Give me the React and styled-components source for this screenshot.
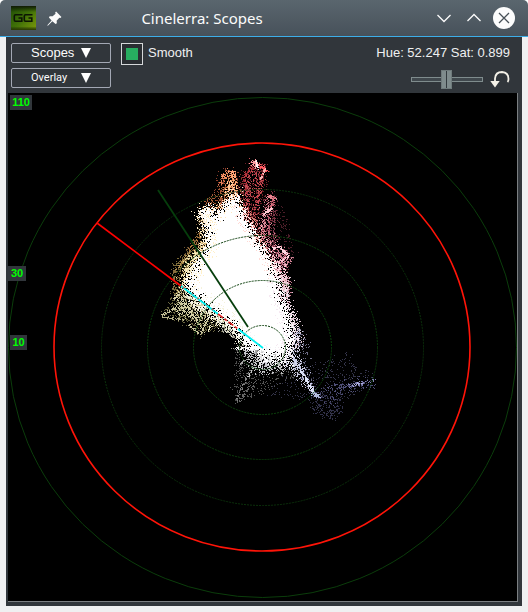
import React, { useState } from 'react';
import styled, { createGlobalStyle } from 'styled-components';

const GlobalStyle = createGlobalStyle`
  * {
    box-sizing: border-box;
  }

  body {
    margin: 0;
    background: #fff;
    font-family: 'Liberation Sans', Arial, sans-serif;
    font-size: 13px;
    color: #eff0f1;
  }
`

const Window = styled.main`
  padding-bottom: 6px;
  background: #eff0f1;
  border-radius: 6px 6px 0 0;
`

const TitleBar = styled.header`
  display: flex;
  align-items: center;
  height: 37px;
  padding: 0 12px 0 11px;
  background: linear-gradient(#5a666e, #47515a);
  border-bottom: 1px solid #3daee9;
  border-radius: 5px 5px 0 0;
`

const Title = styled.h1`
  flex: 1;
  margin: 0;
  padding-right: 94px;
  text-align: center;
  font-family: 'Noto Sans', sans-serif;
  font-size: 15px;
  font-weight: 400;
  line-height: 20px;
  color: #fcfcfc;
`

const IconButton = styled.button`
  display: flex;
  align-items: center;
  justify-content: center;
  width: ${props => props.$size || 24}px;
  height: ${props => props.$size || 24}px;
  padding: 0;
  border: 0;
  background: none;
  color: #fcfcfc;
`

const WindowButtons = styled.div`
  display: flex;
  align-items: center;
  gap: 6px;
`

const Panel = styled.section`
  margin: 0 6px;
  padding: 6px 4px 4px 2px;
  background: #31363b;
`

const Toolbar = styled.div`
  display: flex;
  flex-direction: column;
  gap: 3px;
  padding: 0 8px 3px 3px;
`

const ToolRow = styled.div`
  display: flex;
  align-items: flex-start;
  justify-content: space-between;
  height: 22px;
`

const ToolGroup = styled.div`
  display: flex;
  align-items: flex-start;
  gap: ${props => props.$gap || 10}px;
`

const Dropdown = styled.div`
  position: relative;
  width: 100px;
  height: 20px;
`

const Select = styled.select`
  appearance: none;
  display: block;
  width: 100%;
  height: 100%;
  padding: 0 28px 0 19px;
  border: 1px solid #a3a8b4;
  border-radius: 2px;
  background: #31363b;
  color: #fcfcfc;
  font-family: ${props => props.$small ? 'Roboto, sans-serif' : "'Liberation Sans', Arial, sans-serif"};
  font-size: ${props => props.$small ? 11 : 13}px;
  line-height: 18px;
`

const Arrow = styled.svg`
  position: absolute;
  top: 5px;
  right: 20px;
  width: 10px;
  height: 10px;
  fill: #fff;
  pointer-events: none;
`

const CheckLabel = styled.label`
  display: flex;
  gap: 5px;
  line-height: 20px;
`

const Checkbox = styled.input`
  appearance: none;
  width: 22px;
  height: 22px;
  margin: 0;
  padding: 4px;
  border: 1px solid #d5d8da;
  background: #232629;

  &:checked {
    background: #27ae60 content-box;
    box-shadow: inset 0 0 0 4px #2a2e32;
  }
`

const Readout = styled.output`
  line-height: 20px;
`

const Slider = styled.input`
  appearance: none;
  width: 72px;
  height: 22px;
  margin: 0;
  background: none;

  &::-webkit-slider-runnable-track {
    height: 5px;
    border: 1px solid #7f8c8d;
    background: #40484d;
  }

  &::-webkit-slider-thumb {
    appearance: none;
    width: 11px;
    height: 19px;
    margin-top: -8px;
    border: 1px solid #6f7b7c;
    background: linear-gradient(90deg, #7f8c8d 4px, #333b3f 4px, #333b3f 5px, #7f8c8d 5px);
  }
`

const Scope = styled.svg`
  display: block;
  width: 100%;
  height: auto;
  background: #000;
  border-right: 1px solid #7b7f82;
  border-bottom: 1px solid #7b7f82;
`

const ScaleText = styled.text`
  font-family: 'Liberation Sans', Arial, sans-serif;
  font-size: 11px;
  font-weight: 700;
  fill: #0f0;
`

const CENTER = { x: 262, y: 347 };

const rings = [
  { rx: 254, ry: 250, color: '#0b3d0b' },
  { rx: 161, ry: 158, color: '#0b300b', dash: '2 1' },
  { rx: 115, ry: 112, color: '#0b3c0b', dash: '2 1' },
  { rx: 69, ry: 67, color: '#0c400c', dash: '2 1' },
  { rx: 23, ry: 22, color: '#0c400c', dash: '2 1' }
];

const scale = [
  { value: 110, x: 10, y: 95, width: 22 },
  { value: 30, x: 8, y: 266, width: 18 },
  { value: 10, x: 10, y: 335, width: 17 }
];

const core = [
  [201, 211], [210, 208], [214, 217], [219, 214], [225, 206], [231, 197], [236, 197],
  [239, 206], [243, 217], [248, 226], [253, 233], [256, 242], [263, 251], [269, 261],
  [275, 278], [279, 297], [284, 310], [288, 323], [291, 341], [286, 350], [280, 357],
  [270, 355], [262, 353], [253, 347], [244, 338], [236, 327], [220, 313], [204, 301],
  [192, 291], [188, 284], [193, 271], [201, 257], [207, 249], [208, 230]
];

// core edges in order, each run with its own tint and scatter width
const edges = [
  { from: 0, to: 5, color: '#ffe6bf', spread: 9, density: 3 },
  { from: 5, to: 14, color: '#ffd9d4', spread: 10, density: 4 },
  { from: 14, to: 20, color: '#f6e9f2', spread: 11, density: 6 },
  { from: 20, to: 24, color: '#f2f2f6', spread: 10, density: 5 },
  { from: 24, to: 28, color: '#f4f2dc', spread: 12, density: 5 },
  { from: 28, to: 34, color: '#fff0c8', spread: 11, density: 6 },
  { from: 0, to: 34, color: '#ffffff', spread: 6, density: 6 },
  { from: 0, to: 34, color: '#000000', spread: 7, density: 1 }
];

// polygons filled with scattered samples
const clouds = [
  { n: 260, color: '#8c3f2c', area: [[217, 178], [224, 166], [238, 172], [243, 200], [240, 212], [218, 210], [217, 190]] },
  { n: 200, color: '#e08a56', area: [[221, 175], [232, 171], [238, 184], [244, 210], [218, 212], [224, 190]] },
  { n: 260, color: '#ffd9ae', area: [[229, 184], [236, 184], [244, 212], [240, 218], [214, 220], [207, 207], [220, 205]] },
  { n: 140, color: '#a45a38', area: [[200, 204], [218, 190], [228, 184], [224, 204], [212, 214], [206, 206]] },
  { n: 560, color: '#6c1f27', area: [[241, 176], [251, 161], [266, 164], [266, 186], [259, 208], [262, 245], [244, 216], [239, 195]] },
  { n: 200, color: '#c44850', area: [[244, 172], [252, 161], [264, 164], [262, 180], [257, 205], [254, 225], [242, 205]] },
  { n: 240, color: '#d68078', area: [[240, 205], [250, 210], [260, 230], [268, 250], [262, 256], [246, 226]] },
  { n: 380, color: '#7c2f3e', area: [[262, 198], [273, 192], [276, 218], [275, 248], [287, 252], [290, 270], [273, 268], [258, 240], [263, 220]] },
  { n: 220, color: '#d88c98', area: [[264, 200], [272, 196], [272, 240], [288, 250], [288, 266], [270, 262], [256, 232]] },
  { n: 140, color: '#4b1d28', area: [[272, 195], [284, 210], [293, 240], [292, 262], [274, 248]] },
  { n: 340, color: '#c67c90', area: [[270, 256], [285, 250], [290, 258], [284, 270], [291, 282], [289, 300], [281, 300], [276, 274]] },
  { n: 260, color: '#fbdbe6', area: [[270, 262], [280, 262], [286, 285], [284, 302], [278, 290]] },
  { n: 380, color: '#e0c8d4', area: [[278, 285], [288, 272], [290, 302], [298, 320], [300, 345], [290, 350], [286, 310]] },
  { n: 260, color: '#6f5430', area: [[196, 212], [205, 208], [207, 250], [188, 270], [175, 268], [188, 246], [198, 232]] },
  { n: 240, color: '#d9b87b', area: [[201, 208], [208, 206], [210, 245], [198, 260], [190, 262], [202, 235]] },
  { n: 260, color: '#7c6a38', area: [[174, 262], [193, 246], [198, 256], [182, 284], [186, 292], [175, 298], [172, 282]] },
  { n: 400, color: '#ece0ac', area: [[188, 256], [203, 250], [196, 272], [190, 292], [180, 290], [184, 270]] },
  { n: 560, color: '#69653f', area: [[162, 315], [172, 290], [184, 288], [218, 313], [234, 326], [210, 330], [198, 335], [186, 324]] },
  { n: 460, color: '#cfcba2', area: [[174, 310], [176, 294], [185, 290], [210, 308], [232, 326], [212, 322], [200, 325], [188, 318]] },
  { n: 420, color: '#f5f3e4', area: [[182, 287], [204, 301], [238, 326], [246, 340], [236, 336], [206, 315], [190, 304]] },
  { n: 220, color: '#a5a598', area: [[220, 318], [238, 324], [256, 350], [234, 350], [238, 340], [218, 330]] },
  { n: 360, color: '#565656', area: [[234, 347], [256, 350], [292, 356], [300, 376], [280, 382], [262, 394], [236, 402]] },
  { n: 380, color: '#c8c8cd', area: [[240, 346], [258, 348], [290, 356], [288, 366], [270, 372], [256, 374], [248, 362]] },
  { n: 260, color: '#ffffff', area: [[250, 346], [290, 350], [298, 366], [282, 366], [264, 362]] },
  { n: 380, color: '#c8c8dd', area: [[284, 330], [300, 330], [299, 356], [306, 376], [314, 394], [302, 384], [286, 366]] },
  { n: 150, color: '#6d6d86', area: [[292, 318], [310, 342], [308, 368], [316, 390], [300, 380], [290, 350]] },
  { n: 420, color: '#34344a', area: [[292, 370], [318, 362], [352, 350], [352, 362], [374, 376], [372, 386], [340, 400], [336, 420], [318, 416], [306, 400], [262, 394]] },
  { n: 130, color: '#50507a', area: [[310, 392], [328, 386], [372, 374], [374, 386], [344, 392], [330, 404]] },
  { n: 150, color: '#30304a', area: [[310, 396], [344, 390], [344, 410], [332, 422], [314, 412]] }
];

// denser traces: from, to, spread, count, colour
const traces = [
  [220, 184, 228, 169, 2, 36, '#e88058'],
  [228, 170, 235, 174, 2, 30, '#ffa478'],
  [222, 176, 234, 176, 2, 30, '#ff9c6c'],
  [233, 175, 236, 192, 2, 44, '#ffae7a'],
  [229, 180, 232, 200, 3, 60, '#ffc89a'],
  [252, 162, 258, 165, 3, 70, '#ff9ca0'],
  [256, 160, 257, 168, 1, 30, '#fff0f0'],
  [258, 165, 266, 170, 2, 40, '#ff5c64'],
  [265, 168, 260, 180, 1, 44, '#ffb4b4'],
  [261, 178, 257, 205, 2, 60, '#c84850'],
  [252, 166, 243, 178, 2, 50, '#b4323a'],
  [243, 178, 248, 194, 2, 40, '#a42c36'],
  [248, 182, 246, 210, 3, 50, '#c8505a'],
  [268, 195, 273, 198, 2, 40, '#e88590'],
  [273, 198, 271, 208, 2, 40, '#c86070'],
  [271, 208, 263, 214, 1, 50, '#ffc9d0'],
  [264, 216, 262, 240, 2, 50, '#d67d8c'],
  [268, 215, 269, 246, 1, 50, '#b65a6c'],
  [274, 210, 273, 248, 1, 44, '#803c4e'],
  [272, 248, 280, 246, 1, 30, '#ffd0dc'],
  [280, 247, 288, 256, 1, 44, '#ffd8e2'],
  [288, 256, 278, 262, 1, 40, '#ffc0d0'],
  [284, 262, 285, 290, 2, 50, '#f7bcca'],
  [175, 270, 190, 250, 1, 40, '#b09050'],
  [190, 250, 200, 232, 2, 44, '#a8743c'],
  [198, 210, 206, 224, 1, 50, '#fff0d8'],
  [174, 270, 173, 290, 1, 30, '#8a7040'],
  [161, 315, 176, 307, 1, 44, '#c5c099'],
  [161, 316, 184, 320, 1, 44, '#b5b089'],
  [172, 300, 180, 292, 1, 30, '#d6d0a8'],
  [176, 308, 204, 304, 1, 44, '#d2cda2'],
  [180, 296, 204, 332, 1, 60, '#d6d1a7'],
  [188, 324, 200, 334, 1, 44, '#c8c49d'],
  [200, 334, 208, 318, 1, 40, '#c8c49d'],
  [208, 330, 212, 322, 1, 24, '#e8e4bd'],
  [235, 348, 262, 348, 1, 90, '#ffffff'],
  [262, 350, 248, 376, 1, 60, '#c6c6c6'],
  [262, 350, 258, 370, 1, 50, '#dedede'],
  [258, 350, 236, 400, 1, 55, '#858585'],
  [256, 350, 240, 364, 1, 40, '#a5a5a5'],
  [268, 354, 270, 368, 1, 40, '#dddddd'],
  [274, 354, 282, 372, 1, 40, '#bdbdbd'],
  [236, 348, 236, 402, 1, 45, '#4c4c4c'],
  [236, 402, 254, 382, 2, 50, '#686868'],
  [292, 356, 314, 392, 2, 90, '#cfd3ee'],
  [300, 370, 313, 392, 1, 60, '#e2e8fa'],
  [311, 392, 319, 396, 2, 40, '#afbadb'],
  [348, 386, 374, 380, 2, 44, '#8080b0'],
  [352, 385, 362, 382, 1, 24, '#b0b0e0'],
  [328, 387, 354, 384, 2, 30, '#505078']
];

function seeded(seed) {
  let s = seed;
  return () => {
    s = (s * 16807) % 2147483647;
    return s / 2147483647;
  };
}

function inside(x, y, area) {
  let hit = false;
  for (let i = 0, j = area.length - 1; i < area.length; j = i++) {
    const [xi, yi] = area[i];
    const [xj, yj] = area[j];
    if ((yi > y) !== (yj > y) && x < ((xj - xi) * (y - yi)) / (yj - yi) + xi) {
      hit = !hit;
    }
  }
  return hit;
}

const dot = (x, y) => `M${Math.round(x)} ${Math.round(y)}h1v1h-1z`;

function cloudPath({ area, n }, rand) {
  const xs = area.map(p => p[0]);
  const ys = area.map(p => p[1]);
  const x0 = Math.min(...xs);
  const y0 = Math.min(...ys);
  const w = Math.max(...xs) - x0;
  const h = Math.max(...ys) - y0;
  let d = '';
  let count = 0;
  while (count < n) {
    const x = x0 + rand() * w;
    const y = y0 + rand() * h;
    if (inside(x, y, area)) {
      d += dot(x + 12 * (rand() - 0.5) * rand(), y + 10 * (rand() - 0.5) * rand());
      count++;
    }
  }
  return d;
}

function tracePath([x1, y1, x2, y2, spread, n], rand) {
  let d = '';
  for (let i = 0; i < n; i++) {
    const t = rand();
    d += dot(
      x1 + (x2 - x1) * t + (rand() - 0.5) * spread * 2,
      y1 + (y2 - y1) * t + (rand() - 0.5) * spread * 2
    );
  }
  return d;
}

function edgePath({ from, to, spread, density }, rand) {
  let d = '';
  for (let i = from; i < to; i++) {
    const [x1, y1] = core[i];
    const [x2, y2] = core[(i + 1) % core.length];
    const n = Math.hypot(x2 - x1, y2 - y1) * density;
    for (let k = 0; k < n; k++) {
      const t = rand();
      d += dot(
        x1 + (x2 - x1) * t + (rand() + rand() - 1) * spread,
        y1 + (y2 - y1) * t + (rand() + rand() - 1) * spread
      );
    }
  }
  return d;
}

const rand = seeded(4711);
const cloudShapes = clouds.map(c => ({ color: c.color, d: cloudPath(c, rand) }));
const traceShapes = traces.map(t => ({ color: t[6], d: tracePath(t, rand) }));
const edgeShapes = edges.map(e => ({ color: e.color, d: edgePath(e, rand) }));

const AppIcon = () => (
  <svg width="25" height="24" viewBox="0 0 25 24" aria-hidden="true">
    <defs>
      <linearGradient id="tile" x1="0" y1="0" x2="1" y2="1">
        <stop offset="0" stopColor="#1f4d05" />
        <stop offset=".5" stopColor="#3f7008" />
        <stop offset="1" stopColor="#7d9b0a" />
      </linearGradient>
      <linearGradient id="shade" x1="0" y1="0" x2="0" y2="1">
        <stop offset="0" stopColor="#101a04" />
        <stop offset=".25" stopColor="#101a04" stopOpacity="0" />
        <stop offset=".85" stopColor="#101a04" stopOpacity="0" />
        <stop offset="1" stopColor="#2a3a04" />
      </linearGradient>
    </defs>
    <rect width="25" height="24" fill="url(#tile)" />
    <rect width="25" height="24" fill="url(#shade)" />
    <g fill="none" stroke="#0c1504" strokeWidth="1.6">
      <path d="M11.5 8.8H4.5Q3.3 8.8 3.3 10V14Q3.3 15.2 4.5 15.2H10.8V12H7.5" />
      <path d="M21.5 8.8H14.5Q13.3 8.8 13.3 10V14Q13.3 15.2 14.5 15.2H20.8V12H17.5" />
    </g>
  </svg>
)

const PinIcon = () => (
  <svg width="15" height="15" viewBox="0 0 14 14" fill="currentColor">
    <path d="M8.5 0.5L13.5 5.5L12.5 6.5L11.5 6.2L9 9L9.2 11.5L8 12.2L5 9.5L0.8 13.8L0.3 13.3L4.3 8.8L1.8 6L2.5 5L5.2 5L8 2.5L7.6 1.4Z" />
  </svg>
)

const ChevronIcon = ({ up }) => (
  <svg width="16" height="16" viewBox="0 0 16 16" fill="none" stroke="currentColor" strokeWidth="1.3">
    <path d={up ? 'M1.5 11L8 4.5L14.5 11' : 'M1.5 5L8 11.5L14.5 5'} />
  </svg>
)

const CloseIcon = () => (
  <svg width="22" height="22" viewBox="0 0 22 22">
    <circle cx="11" cy="11" r="11" fill="#fcfcfc" />
    <path d="M6 6L16 16M16 6L6 16" stroke="#475057" strokeWidth="1.3" />
  </svg>
)

const ResetIcon = () => (
  <svg width="20" height="20" viewBox="0 0 20 20" fill="none">
    <path d="M5 14V10.500Q5.500 4 12 4Q18.500 4.500 18.500 11Q18.500 13 17.500 14" stroke="#f4f1e8" strokeWidth="1.800" />
    <path d="M0.300 13H9.700L5 19.500Z" fill="#f4f1e8" />
  </svg>
)

const Menu = ({ label, small, options }) => (
  <Dropdown>
    <Select aria-label={label} $small={small}>
      {options.map(option => <option key={option}>{option}</option>)}
    </Select>
    <Arrow viewBox="0 0 10 10" aria-hidden="true"><path d="M0 0H10L5 10Z" /></Arrow>
  </Dropdown>
)

const Vectorscope = () => (
  <Scope viewBox="8 93 509 508" role="img" aria-label="Vectorscope">
    <g shapeRendering="crispEdges">
      {cloudShapes.map((c, i) => <path key={i} d={c.d} fill={c.color} />)}
      <polygon points={core.join(' ')} fill="#fff" />
      {edgeShapes.map((e, i) => <path key={i} d={e.d} fill={e.color} />)}
      {traceShapes.map((t, i) => <path key={i} d={t.d} fill={t.color} />)}
    </g>
    {rings.map(r => (
      <ellipse
        key={r.rx}
        cx={CENTER.x + 0.5}
        cy={CENTER.y + 0.5}
        rx={r.rx}
        ry={r.ry}
        fill="none"
        stroke={r.color}
        strokeDasharray={r.dash}
      />
    ))}
    <ellipse cx={CENTER.x} cy={CENTER.y} rx="208" ry="204" fill="none" stroke="#ff1408" strokeWidth="1.6" />
    <path d="M158 190L248 327" stroke="#063e0c" strokeWidth="1.8" />
    <path d="M97 223L181 286" stroke="#f00" strokeWidth="1.6" />
    <path d="M181 286L218 314M238 329L263 348" stroke="#00f0f0" strokeWidth="1.8" />
    <path d="M183 287L216 312" stroke="#a07060" strokeWidth="1.8" strokeDasharray="2 9 1 6" />
    <path d="M218 314L238 329" stroke="#e02020" strokeWidth="1.6" strokeDasharray="6 2 3 2" />
    {scale.map(s => (
      <g key={s.value}>
        <rect x={s.x} y={s.y} width={s.width} height="15" fill="#31363b" />
        <ScaleText x={s.x + s.width / 2} y={s.y + 11} textAnchor="middle">{s.value}</ScaleText>
      </g>
    ))}
  </Scope>
)

const App = () => {
  const [smooth, setSmooth] = useState(true);
  const [gain, setGain] = useState(49);

  return (
    <>
      <GlobalStyle />
      <Window>
        <TitleBar>
          <ToolGroup $gap={6}>
            <AppIcon />
            <IconButton type="button" aria-label="Keep above"><PinIcon /></IconButton>
          </ToolGroup>
          <Title>Cinelerra: Scopes</Title>
          <WindowButtons>
            <IconButton type="button" aria-label="Minimize"><ChevronIcon /></IconButton>
            <IconButton type="button" aria-label="Maximize"><ChevronIcon up /></IconButton>
            <IconButton type="button" aria-label="Close"><CloseIcon /></IconButton>
          </WindowButtons>
        </TitleBar>
        <Panel>
          <Toolbar>
            <ToolRow>
              <ToolGroup>
                <Menu label="Scopes" options={['Scopes']} />
                <CheckLabel>
                  <Checkbox type="checkbox" checked={smooth} onChange={e => setSmooth(e.target.checked)} />
                  Smooth
                </CheckLabel>
              </ToolGroup>
              <Readout>Hue: 52.247 Sat: 0.899</Readout>
            </ToolRow>
            <ToolRow>
              <Menu label="Overlay" small options={['Overlay']} />
              <ToolGroup $gap={7}>
                <Slider
                  type="range"
                  aria-label="Gain"
                  value={gain}
                  onChange={e => setGain(Number(e.target.value))}
                />
                <IconButton type="button" aria-label="Reset" $size={20} onClick={() => setGain(49)}><ResetIcon /></IconButton>
              </ToolGroup>
            </ToolRow>
          </Toolbar>
          <Vectorscope />
        </Panel>
      </Window>
    </>
  )
}

export default App;
